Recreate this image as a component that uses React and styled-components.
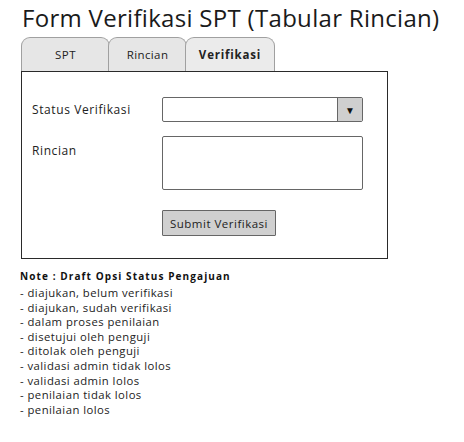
import React from "react";
import styled, { createGlobalStyle } from "styled-components";

const GlobalStyle = createGlobalStyle`
  body {
    margin: 0;
    background: #fff;
    font-family: "Open Sans", "Noto Sans", sans-serif;
    color: #222;
  }
`;

const tabs = [
  { label: "SPT", width: 89 },
  { label: "Rincian", width: 79 },
  { label: "Verifikasi", width: 90, active: true }
];

const statusOptions = [
  "diajukan, belum verifikasi",
  "diajukan, sudah verifikasi",
  "dalam proses penilaian",
  "disetujui oleh penguji",
  "ditolak oleh penguji",
  "validasi admin tidak lolos",
  "validasi admin lolos",
  "penilaian tidak lolos",
  "penilaian lolos"
];

const App = () => {
  return (
    <Page>
      <GlobalStyle />
      <Title>Form Verifikasi SPT (Tabular Rincian)</Title>
      <TabBar>
        {tabs.map(tab => (
          <Tab key={tab.label} width={tab.width} active={tab.active}>
            {tab.label}
          </Tab>
        ))}
      </TabBar>
      <Panel>
        <FormGrid>
          <Label center>Status Verifikasi</Label>
          <SelectBox>
            <SelectField />
            <SelectArrow>▼</SelectArrow>
          </SelectBox>
          <Label>Rincian</Label>
          <TextArea />
          <span />
          <SubmitButton type="button">Submit Verifikasi</SubmitButton>
        </FormGrid>
      </Panel>
      <Note>
        <NoteTitle>Note : Draft Opsi Status Pengajuan</NoteTitle>
        <NoteList>
          {statusOptions.map(option => (
            <li key={option}>- {option}</li>
          ))}
        </NoteList>
      </Note>
    </Page>
  );
};

const Page = styled.div`
  padding: 2px 0 0 21px;
  width: 443px;
`;

const Title = styled.h1`
  margin: 0 0 0 1px;
  font-size: 24px;
  font-weight: 400;
  line-height: 32px;
  color: #1a1a1a;
  letter-spacing: 0.3px;
  white-space: nowrap;
`;

const TabBar = styled.div`
  display: flex;
  margin-top: 3px;
  height: 34px;
  position: relative;
  z-index: 1;
`;

const Tab = styled.div`
  width: ${props => props.width}px;
  height: 34px;
  box-sizing: border-box;
  margin-right: -2px;
  border: 1px solid #a0a0a0;
  border-bottom: none;
  border-radius: 9px 9px 0 0;
  background: ${props => (props.active ? "#ebebeb" : "#e6e6e6")};
  display: flex;
  align-items: center;
  justify-content: center;
  font-size: 11.5px;
  letter-spacing: ${props => (props.active ? 0.8 : 0.4)}px;
  font-weight: ${props => (props.active ? 700 : 400)};
  color: #222;
`;

const Panel = styled.div`
  width: 367px;
  height: 188px;
  box-sizing: border-box;
  border: 1px solid #2a2a2a;
  background: #fff;
  padding: 25px 0 0 10px;
`;

const FormGrid = styled.div`
  display: grid;
  grid-template-columns: 130px 201px;
  grid-template-rows: 25px 54px 26px;
  row-gap: 14px;
  & > :nth-child(5),
  & > :nth-child(6) {
    margin-top: 6px;
  }
`;

const Label = styled.div`
  font-size: 12px;
  letter-spacing: 0.6px;
  color: #222;
  align-self: ${props => (props.center ? "center" : "start")};
  padding-top: ${props => (props.center ? 0 : 6)}px;
`;

const SelectBox = styled.div`
  display: flex;
  box-sizing: border-box;
  border: 1.5px solid #666;
  border-radius: 2px;
  background: #fff;
`;

const SelectField = styled.div`
  flex: 1;
`;

const SelectArrow = styled.div`
  width: 24px;
  border-left: 1.5px solid #666;
  background: #cfcfcf;
  display: flex;
  align-items: center;
  justify-content: center;
  font-size: 10px;
  color: #111;
`;

const TextArea = styled.div`
  box-sizing: border-box;
  border: 1.5px solid #666;
  border-radius: 2px;
  background: #fff;
`;

const SubmitButton = styled.button`
  justify-self: start;
  width: 114px;
  height: 26px;
  box-sizing: border-box;
  border: 1.5px solid #666;
  border-radius: 1px;
  background: #d0d0d0;
  font-family: "Open Sans", "Noto Sans", sans-serif;
  font-size: 11.5px;
  letter-spacing: 0.5px;
  color: #222;
  padding: 0;
`;

const Note = styled.div`
  margin-top: 10px;
  margin-left: -1px;
`;

const NoteTitle = styled.div`
  font-size: 10px;
  font-weight: 700;
  letter-spacing: 1.1px;
  line-height: 14px;
  color: #111;
`;

const NoteList = styled.ul`
  list-style: none;
  margin: 3px 0 0;
  padding: 0;
  font-size: 11.3px;
  letter-spacing: 0.45px;
  line-height: 14.6px;
  color: #222;
`;

export default App;
